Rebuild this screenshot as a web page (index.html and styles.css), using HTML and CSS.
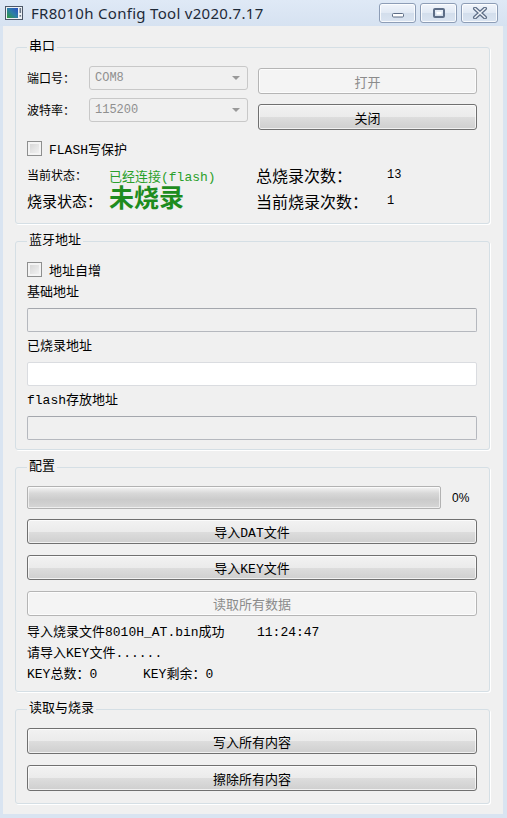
FILE: index.html
```html
<!DOCTYPE html>
<html>
<head>
    <meta charset="UTF-8">
    <title>FR8010h Config Tool v2020.7.17</title>
    <link rel="stylesheet" href="styles.css">
</head>
<body>
<div class="window">
    <div class="titlebar">
        <svg class="app-icon" width="18" height="14" viewBox="0 0 18 14">
            <defs>
                <linearGradient id="ico" x1="0" y1="1" x2="1" y2="0">
                    <stop offset="0" stop-color="#2e9a3a"/>
                    <stop offset="0.5" stop-color="#2c7fa8"/>
                    <stop offset="1" stop-color="#2a4fc0"/>
                </linearGradient>
            </defs>
            <rect x="0.5" y="0.5" width="17" height="13" fill="#eef2f6" stroke="#4d5868"/>
            <rect x="2" y="2" width="11" height="10" fill="url(#ico)"/>
            <rect x="14.5" y="2" width="1.6" height="5" fill="#6a7686"/>
            <rect x="14.5" y="9" width="1.6" height="1.6" fill="#6a7686"/>
        </svg>
        <span class="caption">FR8010h Config Tool v2020.7.17</span>
        <div class="caption-btns">
            <div class="cap-btn">
                <svg width="14" height="10" viewBox="0 0 14 10"><rect x="1.5" y="5.5" width="11" height="3.5" rx="1" fill="#fff" stroke="#5d6d86"/></svg>
            </div>
            <div class="cap-btn">
                <svg width="14" height="10" viewBox="0 0 14 10"><rect x="2" y="1" width="10" height="8" rx="1" fill="none" stroke="#5d6d86" stroke-width="2"/><rect x="4.5" y="4" width="5" height="2.5" fill="#fff"/></svg>
            </div>
            <div class="cap-btn">
                <svg width="16" height="12" viewBox="0 0 16 12"><path d="M3 1.5 L13 10.5 M13 1.5 L3 10.5" stroke="#5d6d86" stroke-width="4" stroke-linecap="round"/><path d="M3 1.5 L13 10.5 M13 1.5 L3 10.5" stroke="#eef2f7" stroke-width="1.6" stroke-linecap="round"/></svg>
            </div>
        </div>
    </div>

    <div class="client">
        <fieldset class="group serial">
            <legend>串口</legend>
            <div class="port-row">
                <div class="port-left">
                    <div class="field-row">
                        <span class="lbl">端口号：</span>
                        <div class="combo">COM8<span class="arrow"></span></div>
                    </div>
                    <div class="field-row">
                        <span class="lbl">波特率：</span>
                        <div class="combo">115200<span class="arrow"></span></div>
                    </div>
                </div>
                <div class="port-right">
                    <button class="btn" disabled>打开</button>
                    <button class="btn">关闭</button>
                </div>
            </div>
            <div class="check"><span class="box"></span>FLASH写保护</div>
            <div class="status">
                <span class="small">当前状态：</span>
                <span class="connected">已经连接(flash)</span>
                <span class="big">总烧录次数：</span>
                <span class="num">13</span>
                <span class="mid">烧录状态：</span>
                <span class="burn">未烧录</span>
                <span class="big">当前烧录次数：</span>
                <span class="num">1</span>
            </div>
        </fieldset>

        <fieldset class="group address">
            <legend>蓝牙地址</legend>
            <div class="check first"><span class="box"></span>地址自增</div>
            <div class="field-label">基础地址</div>
            <div class="input"></div>
            <div class="field-label">已烧录地址</div>
            <div class="input white"></div>
            <div class="field-label">flash存放地址</div>
            <div class="input"></div>
        </fieldset>

        <fieldset class="group config">
            <legend>配置</legend>
            <div class="progress-row">
                <div class="progress"></div>
                <span class="percent">0%</span>
            </div>
            <div class="btn-list">
                <button class="btn">导入DAT文件</button>
                <button class="btn">导入KEY文件</button>
                <button class="btn" disabled>读取所有数据</button>
            </div>
            <div class="log">
                <div><span class="msg">导入烧录文件8010H_AT.bin成功</span>11:24:47</div>
                <div>请导入KEY文件......</div>
                <div><span class="key">KEY总数：0</span>KEY剩余：0</div>
            </div>
        </fieldset>

        <fieldset class="group burn-group">
            <legend>读取与烧录</legend>
            <div class="btn-list">
                <button class="btn">写入所有内容</button>
                <button class="btn">擦除所有内容</button>
            </div>
        </fieldset>
    </div>
</div>
</body>
</html>
```

FILE: styles.css
```css
body {
    margin: 0;
    background-color: #d9e4f1;
    font-family: "Liberation Mono", "Noto Sans CJK SC", monospace;
    font-size: 13px;
    color: #000;
}
.window {
    width: 507px;
    height: 818px;
    display: flex;
    flex-direction: column;
    overflow: hidden;
}
.titlebar {
    height: 27px;
    display: flex;
    align-items: center;
    padding-left: 5px;
    background: linear-gradient(#dfe9f6, #d6e2f1);
}
.app-icon {
    margin-right: 8px;
    margin-top: -1px;
}
.caption {
    flex: 1;
    font-family: "Noto Sans", sans-serif;
    font-size: 15px;
    letter-spacing: 0.3px;
    color: #1e2a38;
}
.caption-btns {
    display: flex;
    gap: 4px;
    align-self: flex-start;
    margin-top: 3px;
    margin-right: 9px;
}
.cap-btn {
    width: 35px;
    height: 18px;
    border: 1px solid #8d9db6;
    border-radius: 3px;
    background: linear-gradient(#f1f5fb, #e1e9f4 50%, #d3deec 51%, #dae4f1);
    box-shadow: inset 0 0 0 1px rgba(255,255,255,0.8);
    display: flex;
    align-items: center;
    justify-content: center;
}
.client {
    flex: 1;
    margin: 0 4px 4px 3px;
    padding: 14px 13px 0 12px;
    background-color: #f0f0f0;
}
.group {
    margin: 0 0 10px;
    padding: 12px 12px 7px 11px;
    min-width: 0;
    border: 1px solid #d5dfe5;
    border-radius: 3px;
    box-shadow: 1px 1px 0 #fff;
}
.group legend {
    padding: 0 2px;
    line-height: 14px;
    font-size: 13px;
}
.serial {
    padding-bottom: 8px;
}
.address {
    padding-bottom: 9px;
}
.config {
    padding-bottom: 6px;
}
.burn-group {
    padding-bottom: 12px;
}
.port-row {
    display: flex;
    gap: 10px;
}
.port-left {
    width: 221px;
    display: flex;
    flex-direction: column;
    gap: 8px;
}
.field-row {
    display: flex;
    align-items: center;
    height: 24px;
}
.lbl {
    width: 62px;
    font-size: 12px;
}
.combo {
    flex: 1;
    height: 24px;
    box-sizing: border-box;
    border: 1px solid #c8c8c8;
    border-radius: 3px;
    padding-left: 5px;
    display: flex;
    align-items: center;
    justify-content: space-between;
    font-size: 12px;
    color: #8f8f8f;
}
.arrow {
    width: 0;
    height: 0;
    margin-right: 7px;
    border-left: 4px solid transparent;
    border-right: 4px solid transparent;
    border-top: 4px solid #999;
}
.port-right {
    flex: 1;
    display: flex;
    flex-direction: column;
    gap: 10px;
    margin-top: 2px;
}
.btn {
    height: 26px;
    width: 100%;
    border: 1px solid #707070;
    border-radius: 3px;
    background: linear-gradient(#f2f2f2, #ebebeb 50%, #dddddd 51%, #cfcfcf);
    box-shadow: inset 0 0 0 1px rgba(255,255,255,0.7);
    font-family: "Liberation Mono", "Noto Sans CJK SC", monospace;
    font-size: 13px;
    color: #000;
    padding: 0;
}
.btn:disabled {
    border-color: #b5b5b5;
    background: #f4f4f4;
    color: #8b8b8b;
}
.check {
    display: flex;
    align-items: center;
    gap: 7px;
    height: 17px;
    margin-top: 10px;
}
.check.first {
    margin-top: 1px;
}
.box {
    width: 13px;
    height: 13px;
    border: 1px solid #8e8f8f;
    background: linear-gradient(135deg, #d2d2d2, #f6f6f6);
    box-shadow: inset 0 0 0 2px #f4f4f4;
}
.status {
    display: grid;
    grid-template-columns: 82px 147px 131px auto;
    grid-template-rows: 24px 28px;
    align-items: center;
    margin-top: 6px;
}
.small {
    font-size: 12px;
}
.connected {
    color: #2ba02b;
}
.big {
    font-size: 16px;
}
.mid {
    font-size: 15px;
}
.num {
    font-size: 12px;
}
.burn {
    font-size: 25px;
    font-weight: bold;
    color: #1e8c1e;
    line-height: 28px;
}
.field-label {
    height: 16px;
    line-height: 16px;
    margin: 7px 0;
}
.input {
    height: 24px;
    box-sizing: border-box;
    border: 1px solid #b5b8be;
    border-top-color: #a4a7ad;
    border-radius: 2px;
    background-color: #f0f0f0;
}
.input.white {
    background-color: #fff;
    border-color: #dadce0;
}
.progress-row {
    display: flex;
    align-items: center;
    gap: 11px;
}
.progress {
    width: 414px;
    height: 23px;
    box-sizing: border-box;
    border: 1px solid #b2b2b2;
    border-radius: 2px;
    background: linear-gradient(#f4f4f4, #d8d8d8 30%, #cbcbcb 60%, #d6d6d6);
    box-shadow: inset 0 0 0 1px rgba(255,255,255,0.6);
}
.percent {
    font-family: "Liberation Sans", sans-serif;
    font-size: 12px;
}
.btn-list {
    display: flex;
    flex-direction: column;
    gap: 11px;
}
.config .btn-list {
    margin-top: 10px;
}
.config .btn {
    height: 25px;
}
.log {
    margin-top: 6px;
}
.log div {
    height: 21px;
    line-height: 21px;
}
.msg {
    display: inline-block;
    width: 230px;
}
.key {
    display: inline-block;
    width: 116px;
}
```
